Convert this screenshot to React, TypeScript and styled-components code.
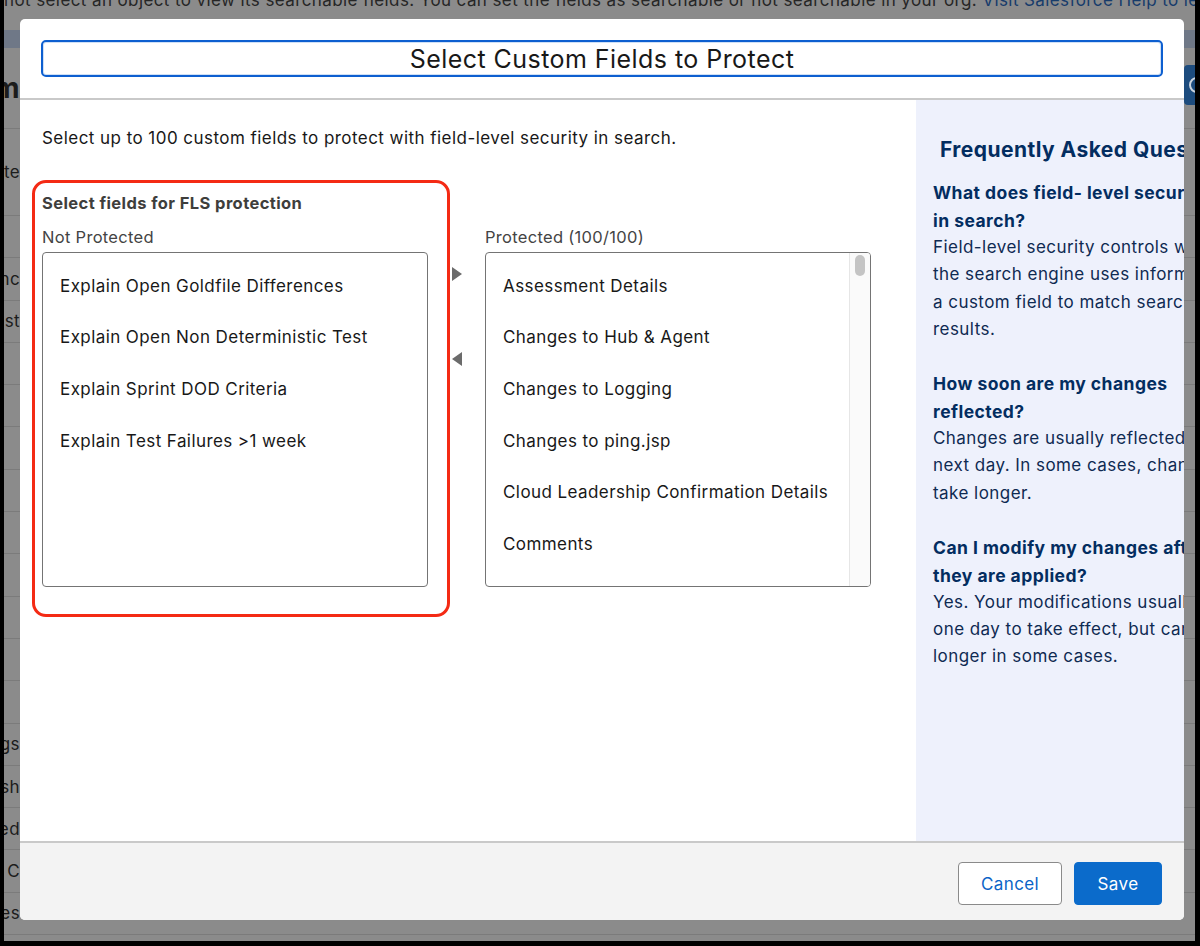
import React, { FC } from 'react';
import styled, { createGlobalStyle } from 'styled-components';

const GlobalStyle = createGlobalStyle`
  html, body {
    margin: 0;
    padding: 0;
    background: #000;
  }
  body {
    font-family: Inter, "Noto Sans", sans-serif;
  }
  * {
    box-sizing: border-box;
  }
`;

const Frame = styled.div`
  width: 1200px;
  height: 946px;
  padding: 0 5px 5px 4px;
  background: #000;
`;

const Screen = styled.div`
  position: relative;
  height: 100%;
  background: #8b8b8b;
  overflow: hidden;
`;

/* dimmed page behind the modal */

const Backdrop = styled.div`
  display: flex;
  flex-direction: column;
  color: #1c1c1c;
  font-size: 17px;
  letter-spacing: 0.4px;
`;

const Notice = styled.p`
  margin: -10px 0 0;
  height: 20px;
  line-height: 20px;
  white-space: nowrap;
  color: #262626;
`;

const NoticeLink = styled.span`
  color: #173c6b;
`;

const TabBand = styled.div`
  height: 18px;
  margin-top: 20px;
  background: #6f7887;
`;

const PageHead = styled.div`
  height: 80px;
  display: flex;
  justify-content: space-between;
  align-items: center;
`;

const Tail = styled.div<{ $size?: number; $bold?: boolean }>`
  width: 16px;
  display: flex;
  justify-content: flex-end;
  overflow: hidden;
  white-space: nowrap;
  font-size: ${p => p.$size ?? 17}px;
  font-weight: ${p => (p.$bold ? 700 : 400)};
`;

const HeadButton = styled.div`
  align-self: flex-start;
  margin-top: 17px;
  margin-right: -29px;
  width: 40px;
  height: 40px;
  border-radius: 4px;
  background: #1d4c7e;
  display: flex;
  align-items: center;
  padding-left: 5px;
`;

const Ring = styled.div`
  width: 16px;
  height: 16px;
  border-radius: 50%;
  border: 2px solid #c9d3de;
`;

const HeadRow = styled.div`
  height: 88px;
  display: flex;
  align-items: center;
  border-top: 1px solid #7b7b7b;
  border-bottom: 1px solid #7b7b7b;
`;

const Row = styled.div`
  height: 42.3px;
  display: flex;
  align-items: center;
  border-bottom: 1px solid #7b7b7b;
`;

/* modal */

const Modal = styled.section`
  position: absolute;
  left: 16px;
  top: 19px;
  width: 1164px;
  height: 901px;
  background: #fff;
  border-radius: 5px;
  overflow: hidden;
  display: flex;
  flex-direction: column;
`;

const ModalHeader = styled.header`
  flex: 0 0 81px;
  padding: 21px 21px 0;
  border-bottom: 2px solid #c9c9c9;
`;

const TitleBox = styled.h1`
  margin: 0;
  height: 37px;
  border: 2px solid #0d5fd0;
  border-radius: 5px;
  box-shadow: inset 0 0 0 1px #cfe0f6;
  display: flex;
  align-items: center;
  justify-content: center;
  font-size: 25px;
  font-weight: 400;
  letter-spacing: 0.45px;
  color: #181818;
`;

const ModalBody = styled.div`
  flex: 1;
  display: flex;
  min-height: 0;
`;

const Main = styled.div`
  width: 896px;
  flex-shrink: 0;
  padding: 26px 22px 0;
`;

const Intro = styled.p`
  margin: 0;
  font-size: 17px;
  line-height: 24px;
  letter-spacing: 0.45px;
  color: #181818;
`;

const Dueling = styled.div`
  margin-top: 30px;
  display: flex;
  align-items: flex-start;
`;

const Highlight = styled.div`
  margin-left: -10px;
  width: 418px;
  border: 3px solid #f42a14;
  border-radius: 14px;
  padding: 9px 19px 27px 7px;
`;

const GroupTitle = styled.div`
  font-size: 16.5px;
  line-height: 22px;
  font-weight: 700;
  letter-spacing: 0.4px;
  color: #3e3e3c;
`;

const ListLabel = styled.div<{ $top?: number }>`
  margin-top: ${p => p.$top ?? 0}px;
  font-size: 16.5px;
  line-height: 22px;
  letter-spacing: 0.3px;
  color: #444;
`;

const ListBox = styled.div`
  margin-top: 4px;
  width: 386px;
  height: 335px;
  border: 1px solid #747474;
  border-radius: 4px;
  background: #fff;
  display: flex;
  overflow: hidden;
`;

const Options = styled.ul`
  flex: 1;
  margin: 0;
  padding: 7px 0 0;
  list-style: none;
  overflow: hidden;
`;

const Option = styled.li`
  height: 51.67px;
  display: flex;
  align-items: center;
  padding-left: 17px;
  font-size: 17px;
  letter-spacing: 0.42px;
  color: #181818;
  white-space: nowrap;
`;

const ScrollTrack = styled.div`
  width: 21px;
  flex-shrink: 0;
  border-left: 1px solid #e6e6e6;
  background: #fafafa;
  padding-top: 2px;
  display: flex;
  justify-content: center;
`;

const Thumb = styled.div`
  width: 10px;
  height: 21px;
  border-radius: 5px;
  background: #c4c4c4;
`;

const Movers = styled.div`
  width: 35px;
  flex-shrink: 0;
  padding: 87px 0 0 2px;
  display: flex;
  flex-direction: column;
  gap: 71px;
`;

const Column = styled.div`
  margin-top: 46px;
`;

const Panel = styled.aside`
  width: 268px;
  flex-shrink: 0;
  background: #eef1fc;
  overflow: hidden;
  padding-left: 17px;
`;

const FaqInner = styled.div`
  width: 400px;
  color: #032d60;
`;

const FaqTitle = styled.h2`
  margin: 37px 0 0 7px;
  font-size: 21px;
  line-height: 26px;
  font-weight: 700;
  letter-spacing: 0.45px;
  white-space: nowrap;
`;

const Faq = styled.div`
  margin-top: 16.4px;
  display: flex;
  flex-direction: column;
  gap: 27.3px;
`;

const Line = styled.div<{ $bold?: boolean }>`
  font-size: ${p => (p.$bold ? 17.5 : 17)}px;
  line-height: 27.3px;
  font-weight: ${p => (p.$bold ? 700 : 400)};
  letter-spacing: ${p => (p.$bold ? 0.45 : 0.45)}px;
  color: ${p => (p.$bold ? '#032d60' : '#0f2a52')};
  white-space: nowrap;
`;

const Footer = styled.footer`
  flex: 0 0 79px;
  border-top: 2px solid #c9c9c9;
  background: #f3f3f3;
  padding: 19px 22px 0;
  display: flex;
  justify-content: flex-end;
  align-items: flex-start;
  gap: 12px;
`;

const Button = styled.button<{ $brand?: boolean }>`
  height: 43px;
  width: ${p => (p.$brand ? 88 : 104)}px;
  border-radius: 4px;
  border: 1px solid ${p => (p.$brand ? '#0b6bcb' : '#8a8a8a')};
  background: ${p => (p.$brand ? '#0b6bcb' : '#fff')};
  color: ${p => (p.$brand ? '#fff' : '#0b64c7')};
  font-family: inherit;
  font-size: 17px;
  letter-spacing: 0.4px;
  cursor: pointer;
`;

const Arrow: FC<{ dir: 'right' | 'left' }> = ({ dir }) => (
  <svg width="10" height="14" viewBox="0 0 10 14">
    <polygon points={dir === 'right' ? '0,0 10,7 0,14' : '10,0 0,7 10,14'} fill="#6b6b6b" />
  </svg>
);

const notProtected = [
  'Explain Open Goldfile Differences',
  'Explain Open Non Deterministic Test',
  'Explain Sprint DOD Criteria',
  'Explain Test Failures >1 week',
];

const protectedFields = [
  'Assessment Details',
  'Changes to Hub & Agent',
  'Changes to Logging',
  'Changes to ping.jsp',
  'Cloud Leadership Confirmation Details',
  'Comments',
  'Customer Impact',
  'Deployment Notes',
];

const faqs = [
  {
    q: ['What does field- level security mean', 'in search?'],
    a: [
      'Field-level security controls whether',
      'the search engine uses information in',
      'a custom field to match search',
      'results.',
    ],
  },
  {
    q: ['How soon are my changes', 'reflected?'],
    a: ['Changes are usually reflected the', 'next day. In some cases, changes can', 'take longer.'],
  },
  {
    q: ['Can I modify my changes after', 'they are applied?'],
    a: ['Yes. Your modifications usually take', 'one day to take effect, but can take', 'longer in some cases.'],
  },
];

// only the tails of a few words peek out beside the modal
const backRows = [
  '', 'Sync', 'Test', '', '', '', '', '', '', '', '', '',
  'Settings', 'Refresh', 'Created', 'Terms C', 'Notes',
];

const App: FC = () => {
  return (
    <Frame>
      <GlobalStyle />
      <Screen>
        <Backdrop>
          <Notice>
            not select an object to view its searchable fields. You can set the fields as searchable or not
            searchable in your org. <NoticeLink>Visit Salesforce Help to learn more.</NoticeLink>
          </Notice>
          <TabBand />
          <PageHead>
            <Tail $size={28} $bold>Custom</Tail>
            <HeadButton>
              <Ring />
            </HeadButton>
          </PageHead>
          <HeadRow>
            <Tail>Protecte</Tail>
          </HeadRow>
          {backRows.map((r, i) => (
            <Row key={i}>
              <Tail>{r}</Tail>
            </Row>
          ))}
        </Backdrop>

        <Modal>
          <ModalHeader>
            <TitleBox>Select Custom Fields to Protect</TitleBox>
          </ModalHeader>

          <ModalBody>
            <Main>
              <Intro>Select up to 100 custom fields to protect with field-level security in search.</Intro>
              <Dueling>
                <Highlight>
                  <GroupTitle>Select fields for FLS protection</GroupTitle>
                  <ListLabel $top={12}>Not Protected</ListLabel>
                  <ListBox>
                    <Options>
                      {notProtected.map(f => (
                        <Option key={f}>{f}</Option>
                      ))}
                    </Options>
                  </ListBox>
                </Highlight>

                <Movers>
                  <Arrow dir="right" />
                  <Arrow dir="left" />
                </Movers>

                <Column>
                  <ListLabel>Protected (100/100)</ListLabel>
                  <ListBox>
                    <Options>
                      {protectedFields.map(f => (
                        <Option key={f}>{f}</Option>
                      ))}
                    </Options>
                    <ScrollTrack>
                      <Thumb />
                    </ScrollTrack>
                  </ListBox>
                </Column>
              </Dueling>
            </Main>

            <Panel>
              <FaqInner>
                <FaqTitle>Frequently Asked Questions</FaqTitle>
                <Faq>
                  {faqs.map((item, i) => (
                    <div key={i}>
                      {item.q.map(l => (
                        <Line key={l} $bold>{l}</Line>
                      ))}
                      {item.a.map(l => (
                        <Line key={l}>{l}</Line>
                      ))}
                    </div>
                  ))}
                </Faq>
              </FaqInner>
            </Panel>
          </ModalBody>

          <Footer>
            <Button>Cancel</Button>
            <Button $brand>Save</Button>
          </Footer>
        </Modal>
      </Screen>
    </Frame>
  );
};

export default App;
